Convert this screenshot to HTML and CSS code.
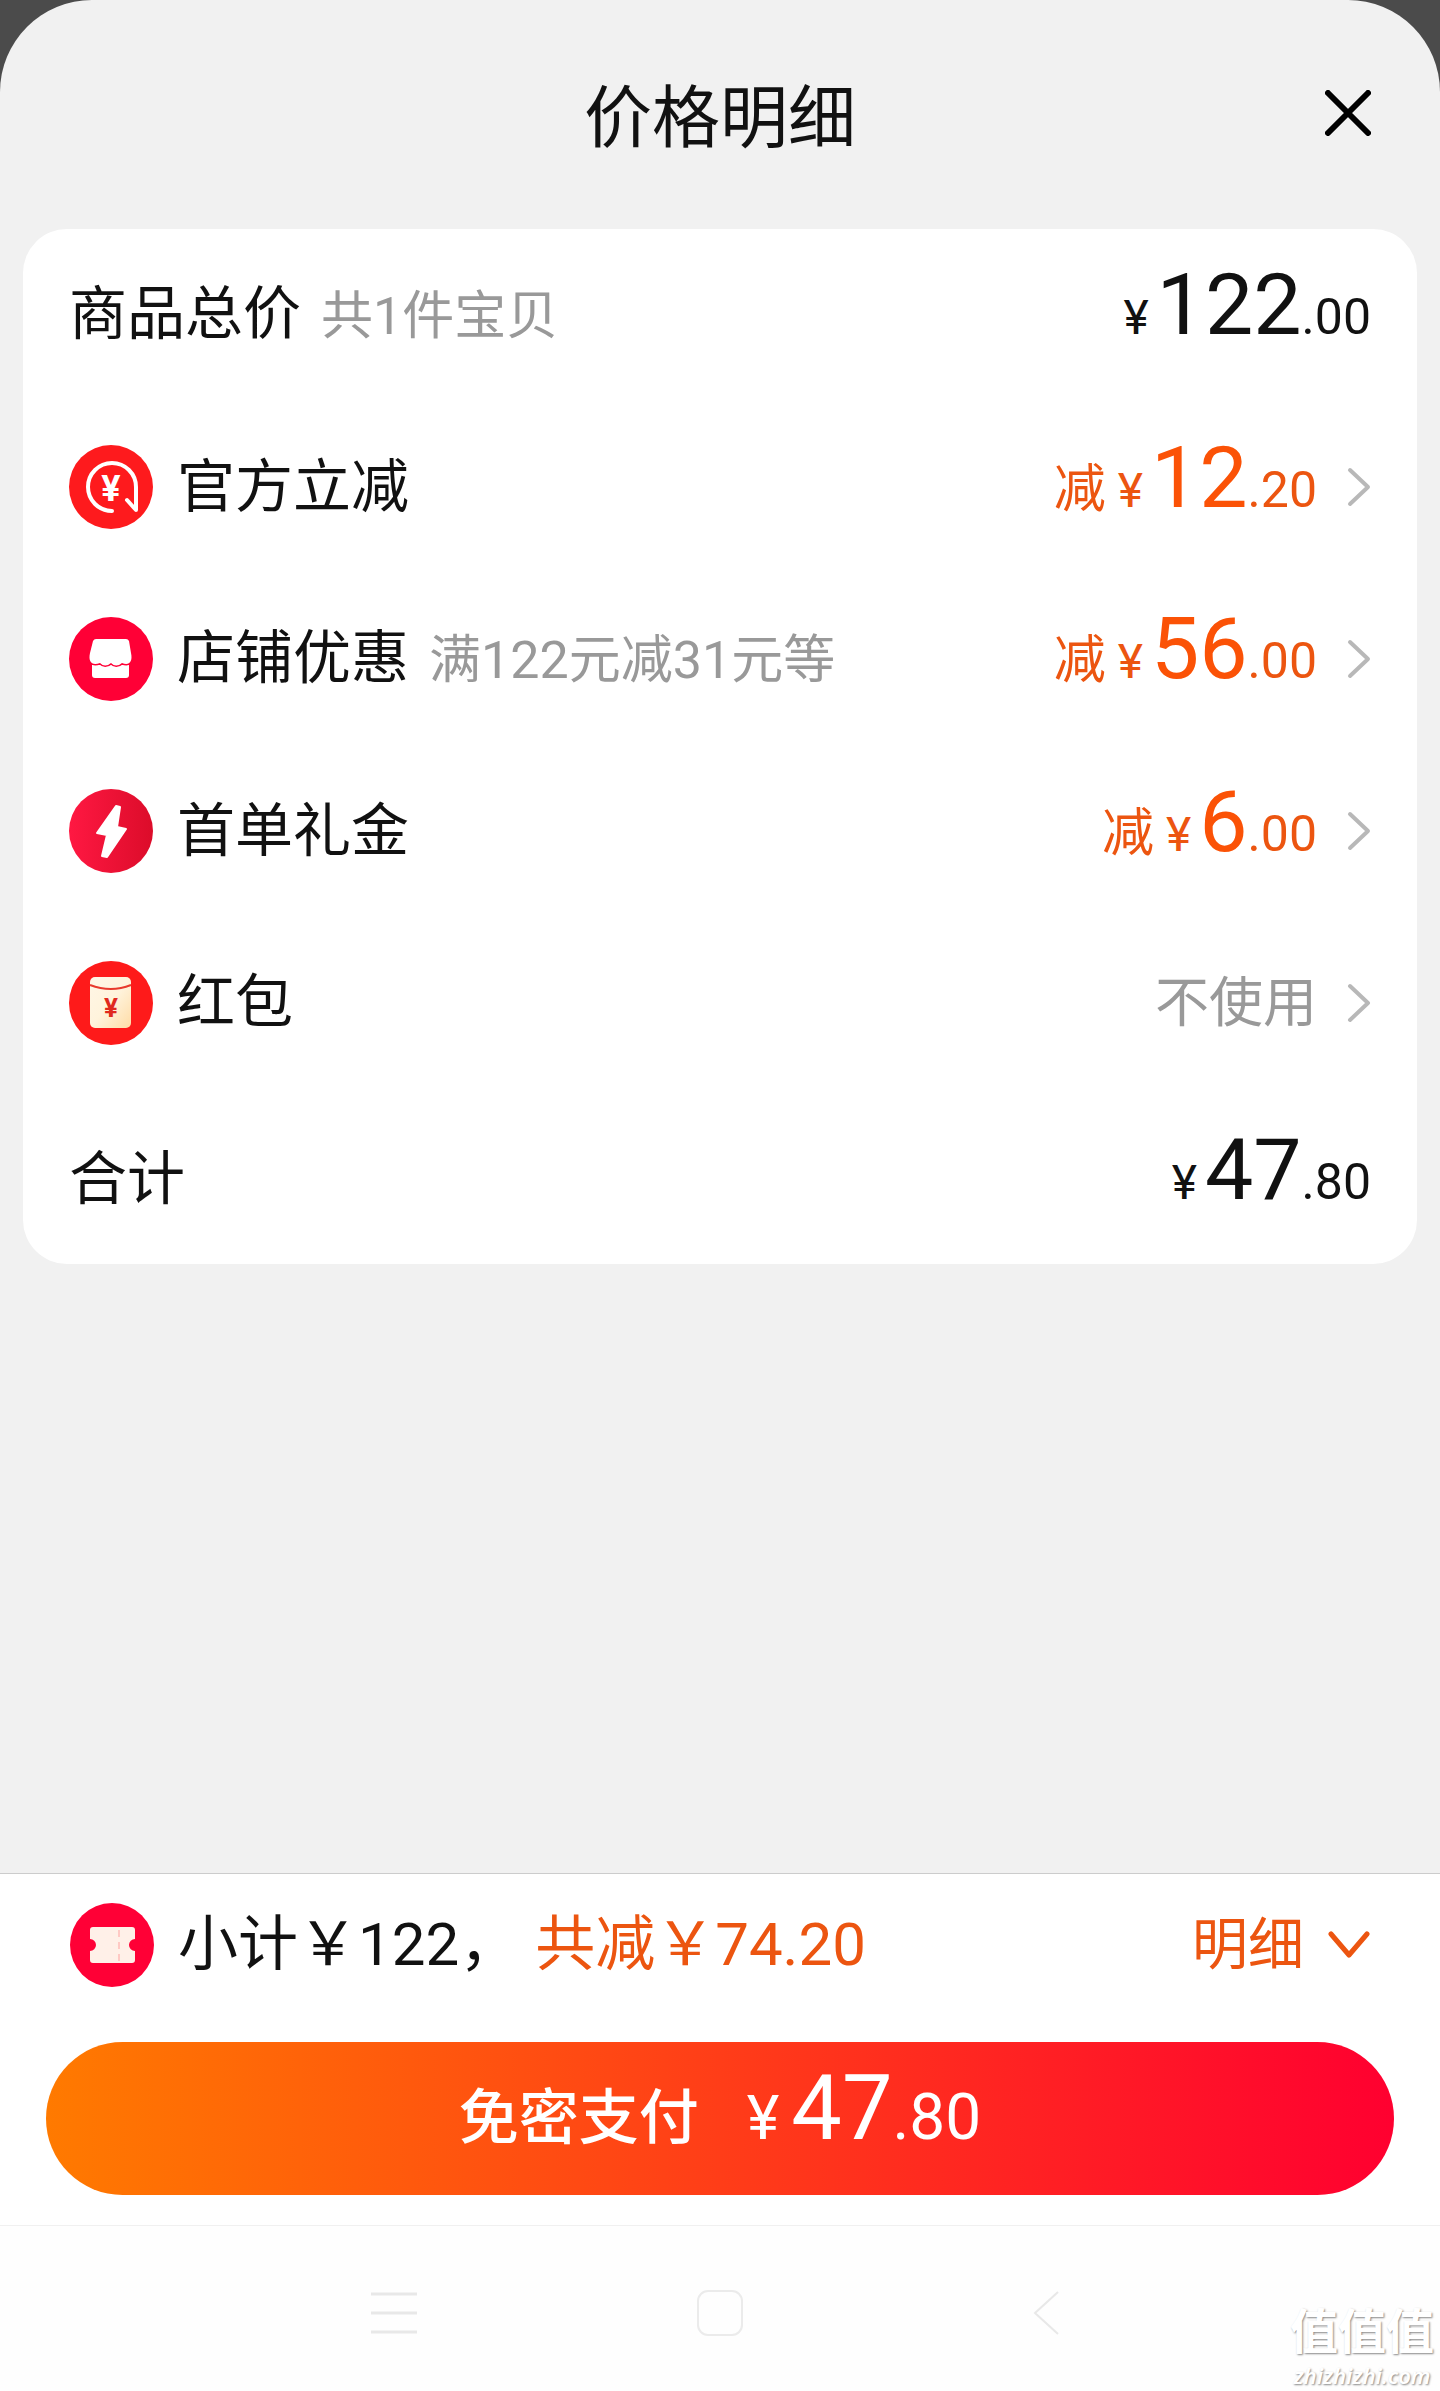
FILE: index.html
```html
<!DOCTYPE html>
<html lang="zh-CN">
<head>
<meta charset="utf-8">
<meta name="viewport" content="width=device-width, initial-scale=1">
<title>价格明细</title>
<link rel="stylesheet" href="styles.css">
</head>
<body>
<main class="sheet">
  <header class="sheet-header">
    <h1 class="title">价格明细</h1>
    <button class="close" type="button" aria-label="关闭">
      <svg width="46" height="46" viewBox="0 0 46 46" fill="none" stroke="#000" stroke-width="6" stroke-linecap="round"><path d="M3 3L43 43M43 3L3 43"/></svg>
    </button>
  </header>

  <ul class="card">
    <li class="row">
      <div class="row-text">
        <span class="label">商品总价</span><span class="note">共1件宝贝</span>
        <span class="amount"><span class="yen">¥</span><span class="int">122</span><span class="dec">.00</span></span>
      </div>
    </li>
    <li class="row">
      <svg class="icon" viewBox="0 0 84 84">
        <circle cx="42" cy="42" r="42" fill="#fe1a1d"/>
        <path d="M43 66A24 24 0 1 1 67 42V65L58 55" fill="none" stroke="#fff" stroke-width="4" stroke-linecap="round" stroke-linejoin="round"/>
        <text class="icon-yen" x="42" y="56" font-size="36" fill="#fff">¥</text>
      </svg>
      <div class="row-text">
        <span class="label">官方立减</span>
        <span class="amount off"><span class="minus">减</span><span class="yen">¥</span><span class="int">12</span><span class="dec">.20</span></span>
      </div>
      <svg class="chevron" viewBox="0 0 24 40"><path d="M3 3L21 20L3 37"/></svg>
    </li>
    <li class="row">
      <svg class="icon" viewBox="0 0 84 84">
        <circle cx="42" cy="42" r="42" fill="#ff0036"/>
        <path d="M23 48H60V58Q60 61 57 61H26Q23 61 23 58Z" fill="#fff"/>
        <path d="M27 22H57Q59 22 60 24L62 36C64 45 60 49 53 46Q47 51 42 46Q36 51 31 46C23 49 19 45 21 36L24 24Q25 22 27 22Z" fill="#fff" stroke="#ff0036" stroke-width="3" paint-order="stroke"/>
      </svg>
      <div class="row-text">
        <span class="label">店铺优惠</span><span class="note">满122元减31元等</span>
        <span class="amount off"><span class="minus">减</span><span class="yen">¥</span><span class="int">56</span><span class="dec">.00</span></span>
      </div>
      <svg class="chevron" viewBox="0 0 24 40"><path d="M3 3L21 20L3 37"/></svg>
    </li>
    <li class="row">
      <svg class="icon" viewBox="0 0 84 84">
        <defs><linearGradient id="bolt"><stop stop-color="#ff1842"/><stop offset="1" stop-color="#dc0c2a"/></linearGradient></defs>
        <circle cx="42" cy="42" r="42" fill="url(#bolt)"/>
        <path d="M47 17L51 18L48 38L57 40L38 68L33 67L38 46L28 44Z" fill="#fff" stroke="#fff" stroke-width="2" stroke-linejoin="round"/>
      </svg>
      <div class="row-text">
        <span class="label">首单礼金</span>
        <span class="amount off"><span class="minus">减</span><span class="yen">¥</span><span class="int">6</span><span class="dec">.00</span></span>
      </div>
      <svg class="chevron" viewBox="0 0 24 40"><path d="M3 3L21 20L3 37"/></svg>
    </li>
    <li class="row">
      <svg class="icon" viewBox="0 0 84 84">
        <defs><linearGradient id="packet" x2="1" y2="1"><stop stop-color="#fff6e6"/><stop offset=".5" stop-color="#fff3dc"/><stop offset="1" stop-color="#ffdca6"/></linearGradient></defs>
        <circle cx="42" cy="42" r="42" fill="#fe1a1a"/>
        <rect x="21" y="16" width="41" height="51" rx="5" fill="url(#packet)"/>
        <path d="M21 24Q42 32 62 24" fill="none" stroke="#e8392c" stroke-width="2"/>
        <text class="icon-yen" x="42" y="56" font-size="26" fill="#e0281e">¥</text>
      </svg>
      <div class="row-text">
        <span class="label">红包</span>
        <span class="note unused">不使用</span>
      </div>
      <svg class="chevron" viewBox="0 0 24 40"><path d="M3 3L21 20L3 37"/></svg>
    </li>
    <li class="row total">
      <div class="row-text">
        <span class="label">合计</span>
        <span class="amount"><span class="yen">¥</span><span class="int">47</span><span class="dec">.80</span></span>
      </div>
    </li>
  </ul>
</main>

<footer class="pay-bar">
  <div class="subtotal">
    <svg class="icon" viewBox="0 0 84 84">
      <circle cx="42" cy="42" r="42" fill="#ff0036"/>
      <path d="M23 24H62Q65 24 65 27V36A6 6 0 0 0 65 48V57Q65 60 62 60H23Q20 60 20 57V48A6 6 0 0 0 20 36V27Q20 24 23 24Z" fill="#fff0e8"/>
      <path d="M49 27V58" stroke="#ffc9c4" stroke-width="2" stroke-dasharray="7 5"/>
    </svg>
    <p class="subtotal-text"><span>小计￥122，</span><span class="saved">共减￥74.20</span></p>
    <button class="toggle" type="button"><span>明细</span>
      <svg width="42" height="28" viewBox="0 0 42 28" fill="none" stroke="#ec5510" stroke-width="5" stroke-linecap="round" stroke-linejoin="round"><path d="M3 3L21 24L39 3"/></svg>
    </button>
  </div>
  <button class="pay" type="button">
    <span class="pay-text"><span class="pay-label">免密支付</span><span class="yen">¥</span><span class="int">47</span><span class="dec">.80</span></span>
  </button>
</footer>

<nav class="system-nav" aria-label="系统导航">
  <button type="button" aria-label="最近任务"><svg width="46" height="46" viewBox="0 0 46 46" fill="none" stroke="#e8e8e8" stroke-width="3"><path d="M0 4H46M0 23H46M0 42H46"/></svg></button>
  <button type="button" aria-label="主屏幕"><svg width="46" height="46" viewBox="0 0 46 46" fill="none" stroke="#ebebeb" stroke-width="2"><rect x="1" y="1" width="44" height="44" rx="10"/></svg></button>
  <button type="button" aria-label="返回"><svg width="26" height="46" viewBox="0 0 26 46" fill="none" stroke="#e8e8e8" stroke-width="2"><path d="M25 2L2 23L25 44"/></svg></button>
  <div class="watermark"><span class="mark-name">值值值</span><span class="mark-site">zhizhizhi.com</span></div>
</nav>
</body>
</html>
```
FILE: styles.css
```css
* { box-sizing: border-box; }

body {
  margin: 0;
  min-height: 100vh;
  display: flex;
  flex-direction: column;
  background: #4b4b4b;
  color: #111;
  font-family: Roboto, "Noto Sans CJK SC", sans-serif;
}

button {
  margin: 0;
  padding: 0;
  border: 0;
  background: none;
  color: inherit;
  font: inherit;
}

svg { display: block; flex: none; }

.sheet {
  flex: 1;
  padding: 0 23px 40px;
  background: #f1f1f1;
  border-radius: 92px 92px 0 0;
}

.sheet-header {
  display: grid;
  grid-template-columns: 1fr auto 1fr;
  align-items: center;
  min-height: 229px;
  padding: 0 46px 4px;
}

.title {
  grid-column: 2;
  margin: 0;
  font: 400 68px/80px "Noto Sans CJK SC", sans-serif;
}

.close { justify-self: end; }

.card {
  margin: 0;
  padding: 0 46px;
  list-style: none;
  background: #fff;
  border-radius: 44px;
}

.row {
  display: flex;
  align-items: center;
  min-height: 172px;
}

.total { min-height: 175px; padding-top: 4px; }

.icon { width: 84px; height: 84px; margin-right: 24px; }
.icon-yen { font-weight: 700; text-anchor: middle; }

.row-text {
  flex: 1;
  display: flex;
  align-items: baseline;
}

.label { font-size: 58px; line-height: 60px; }
.note { margin-left: 20px; font-size: 52px; line-height: 60px; color: #999; }
.unused { margin-left: auto; font-size: 54px; }

.amount {
  display: flex;
  align-items: baseline;
  margin-left: auto;
  line-height: 24px;
}

.minus { margin-right: 12px; font-size: 52px; }
.yen { margin-right: 8px; font-size: 48px; }
.int { font-size: 86px; }
.dec { font-size: 50px; }
.off, .saved, .toggle { color: #ec5510; }
.off .int { color: #fb5206; }

.chevron {
  width: 24px;
  height: 40px;
  margin-left: 30px;
  fill: none;
  stroke: #b8b8b8;
  stroke-width: 4;
  stroke-linecap: round;
  stroke-linejoin: round;
}

.pay-bar {
  padding: 0 46px 30px;
  background: #fff;
  border-top: 1px solid #ccc;
}

.subtotal {
  display: flex;
  align-items: center;
  min-height: 142px;
  padding: 0 24px;
}

.subtotal-text {
  display: flex;
  gap: 16px;
  margin: 0;
  font-size: 60px;
  line-height: 60px;
}

.toggle {
  display: flex;
  align-items: center;
  gap: 24px;
  margin-left: auto;
  font-size: 56px;
  line-height: 60px;
}

.pay {
  display: flex;
  align-items: center;
  justify-content: center;
  width: 100%;
  height: 153px;
  margin-top: 26px;
  border-radius: 77px;
  background: linear-gradient(90deg, #ff7a00, #ff0030);
  color: #fff;
}

.pay-text {
  display: flex;
  align-items: baseline;
  line-height: 24px;
}

.pay-label { margin-right: 48px; font-size: 60px; line-height: 60px; font-weight: 500; }
.pay .yen { margin-right: 12px; font-size: 62px; }
.pay .int { font-size: 90px; }
.pay .dec { font-size: 64px; }

.system-nav {
  position: relative;
  display: grid;
  grid-template-columns: repeat(3, 1fr);
  place-items: center;
  height: 166px;
  padding: 8px 16% 0;
  background: #fefefe;
  border-top: 1px solid #f0f0f0;
}

.watermark {
  position: absolute;
  right: 6px;
  bottom: 4px;
  display: flex;
  flex-direction: column;
  align-items: center;
  gap: 6px;
  color: #fff;
  text-shadow: 1px 1px 2px #888;
}

.mark-name { font-size: 48px; line-height: 48px; font-weight: 700; }
.mark-site { font: italic 600 22px/24px "Noto Sans", sans-serif; }
```
